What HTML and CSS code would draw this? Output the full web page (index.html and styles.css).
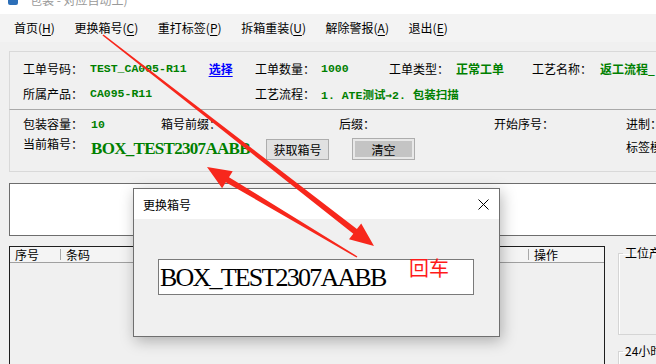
FILE: index.html
```html
<!DOCTYPE html>
<html lang="zh-CN">
<head>
<meta charset="utf-8">
<title>包装</title>
<link rel="stylesheet" href="styles.css">
</head>
<body>
<div class="titlebar"><span class="app-icon"></span><span class="title-text">包装 - 对应自动工)</span></div>
<nav class="menubar">
  <span class="menu-item">首页(<u>H</u>)</span>
  <span class="menu-item">更换箱号(<u>C</u>)</span>
  <span class="menu-item">重打标签(<u>P</u>)</span>
  <span class="menu-item">拆箱重装(<u>U</u>)</span>
  <span class="menu-item">解除警报(<u>A</u>)</span>
  <span class="menu-item">退出(<u>E</u>)</span>
</nav>
<main class="content">
  <section class="group g1">
    <span class="lbl">工单号码：</span>
    <span class="val-wrap"><span class="val">TEST_CA095-R11</span><span class="link">选择</span></span>
    <span class="lbl">工单数量：</span>
    <span class="val">1000</span>
    <span class="lbl">工单类型：</span>
    <span class="val val-cjk">正常工单</span>
    <span class="lbl">工艺名称：</span>
    <span class="val val-cjk">返工流程_</span>
    <span class="lbl">所属产品：</span>
    <span class="val">CA095-R11</span>
    <span class="lbl">工艺流程：</span>
    <span class="val val-span">1. ATE测试<span class="arrow-glyph">→</span>2. 包装扫描</span>
  </section>
  <section class="group g2">
    <div class="row row1">
      <span class="cell w138"><span class="lbl lw">包装容量：</span><span class="val">10</span></span>
      <span class="cell w178"><span class="lbl">箱号前缀：</span></span>
      <span class="cell w155"><span class="lbl">后缀：</span></span>
      <span class="cell w132"><span class="lbl">开始序号：</span></span>
      <span class="cell"><span class="lbl">进制：</span></span>
    </div>
    <div class="row row2">
      <span class="lbl lw lbl-up">当前箱号：</span>
      <span class="box-no">BOX_TEST2307AABB</span>
      <span class="btn">获取箱号</span>
      <span class="btn btn-pressed">清空</span>
      <span class="lbl lbl-right">标签模板：</span>
    </div>
  </section>
  <div class="log-box"></div>
  <div class="bottom">
    <div class="table">
      <div class="thead">
        <span class="th c-no">序号</span>
        <span class="th c-code">条码</span>
        <span class="th c-op">操作</span>
      </div>
    </div>
    <div class="side">
      <fieldset class="fs fs1"><legend>工位产量</legend></fieldset>
      <fieldset class="fs fs2"><legend>24小时产量</legend></fieldset>
    </div>
  </div>
</main>

<div class="dialog">
  <div class="dlg-title">
    <span>更换箱号</span>
    <svg class="dlg-close" width="11" height="11" viewBox="0 0 11 11"><path d="M0.5 0.5 L10.5 10.5 M10.5 0.5 L0.5 10.5" stroke="#000" stroke-width="1" fill="none"/></svg>
  </div>
  <div class="dlg-body">
    <div class="dlg-input">BOX_TEST2307AABB</div>
  </div>
</div>

<span class="note">回车</span>

<svg class="arrows" width="656" height="364" viewBox="0 0 656 364">
  <polygon fill="#f7271c" points="103.5,34.4 356.9,228.9 361.2,223.4 374,246 349.0,239.2 353.3,233.7 102.5,35.6"/>
  <polygon fill="#f7271c" points="207,167 232.7,171.2 229.0,177.2 357.4,256.4 356.6,257.6 225.8,182.2 222.1,188.2"/>
</svg>
</body>
</html>
```
FILE: styles.css
```css
html, body {
  margin: 0;
  padding: 0;
}
body {
  width: 656px;
  height: 364px;
  overflow: hidden;
  position: relative;
  background: #f0f0f0;
  font-family: "Noto Sans CJK SC", "Noto Sans", sans-serif;
  font-size: 12px;
  color: #000;
}

/* title bar */
.titlebar {
  height: 14px;
  background: #fff;
  overflow: hidden;
  display: flex;
  align-items: flex-start;
}
.app-icon {
  width: 10px;
  height: 12px;
  margin: -7px 0 0 8px;
  background: #2d6fb8;
  border-radius: 2px;
}
.title-text {
  margin: -9px 0 0 12px;
  color: #9a9a9a;
  font-size: 12px;
  line-height: 17px;
}

/* menu */
.menubar {
  height: 28px;
  background: #f3f3f3;
  display: flex;
  align-items: center;
  padding-left: 4px;
}
.menu-item {
  padding: 0 9.6px 0 10px;
  line-height: 16px;
}
.menu-item u {
  text-underline-offset: 2px;
}

/* content */
.content {
  padding: 9px 0 0 9px;
}
.group {
  margin-right: -20px;
  box-sizing: border-box;
}
.g1 {
  height: 59px;
  border: 1px solid #d9d9d9;
  border-bottom: 1px solid #a9a9a9;
  display: grid;
  grid-template-columns: 67px 165px 66px 68px 67px 76px 68px auto;
  grid-auto-rows: 25px;
  align-items: center;
  padding: 4px 0 0 13px;
}
.lbl {
  white-space: nowrap;
  line-height: 16px;
}
.val {
  font-family: "Liberation Mono", "Noto Sans CJK SC", monospace;
  font-weight: bold;
  font-size: 11.5px;
  color: #008000;
  white-space: nowrap;
}
.arrow-glyph {
  font-family: "DejaVu Sans Mono", monospace;
  font-weight: bold;
  font-size: 11px;
}
.val-cjk {
  font-family: "Noto Sans CJK SC", sans-serif;
  font-size: 12px;
  color: #008000;
}
.val-span {
  grid-column: 4 / span 5;
}
.val-wrap {
  display: flex;
  align-items: center;
  gap: 22px;
}
.link {
  color: #0000ff;
  font-weight: bold;
  text-decoration: underline;
  text-underline-offset: 2px;
}

.g2 {
  height: 62px;
  border-left: 1px solid #d9d9d9;
  border-bottom: 1px solid #d9d9d9;
  padding: 4px 0 0 13px;
}
.row {
  display: flex;
  align-items: center;
}
.row1 {
  height: 20px;
}
.cell {
  display: flex;
  align-items: center;
  flex: none;
}
.w138 { width: 138px; }
.w178 { width: 178px; }
.w155 { width: 155px; }
.w132 { width: 132px; }
.lw {
  width: 68px;
  flex: none;
}
.row2 {
  height: 24px;
  margin-top: 3px;
}
.lbl-up {
  align-self: flex-start;
  margin-top: -1px;
}
.box-no {
  width: 175px;
  flex: none;
  font-family: "Liberation Serif", serif;
  font-weight: bold;
  font-size: 17px;
  letter-spacing: -0.7px;
  color: #008000;
  white-space: nowrap;
  line-height: 20px;
}
.btn {
  width: 63px;
  height: 21px;
  box-sizing: border-box;
  flex: none;
  display: flex;
  align-items: center;
  justify-content: center;
  background: #e1e1e1;
  border: 1px solid #adadad;
}
.btn-pressed {
  margin-left: 23px;
  height: 22px;
  background: #c4c4c4;
  box-shadow: inset 0 0 0 2px #e8e8e8;
}
.lbl-right {
  margin-left: 211px;
  align-self: flex-start;
  margin-top: 2px;
}

.log-box {
  margin-top: 11px;
  height: 53px;
  box-sizing: border-box;
  background: #fff;
  border: 1px solid #6d6d6d;
  margin-right: -20px;
}

.bottom {
  margin-top: 10px;
  display: flex;
  align-items: flex-start;
}
.table {
  width: 596px;
  height: 140px;
  box-sizing: border-box;
  border: 1px solid #1e1e1e;
  flex: none;
}
.thead {
  height: 16px;
  box-sizing: border-box;
  border-bottom: 1px solid #a0a0a0;
  display: flex;
  background: #f4f4f4;
}
.th {
  display: flex;
  align-items: center;
  line-height: 14px;
}
.th + .th::before {
  content: "";
  width: 1px;
  height: 11px;
  background: #a8a8a8;
  margin-right: 5px;
}
.c-no {
  width: 50px;
  padding-left: 5px;
  box-sizing: border-box;
}
.c-code {
  flex: 1;
}
.c-op {
  width: 76px;
}

.side {
  margin-left: 13px;
  width: 120px;
  flex: none;
}
.fs {
  margin: 0;
  padding: 0 0 0 4px;
  border: 1px solid #d5d5d5;
  box-shadow: 1px 1px 0 #fff inset;
  min-inline-size: 0;
}
.fs legend {
  padding: 0 2px;
  line-height: 14px;
}
.fs1 {
  height: 89px;
  box-sizing: border-box;
}
.fs2 {
  margin-top: 9px;
  height: 40px;
}

/* dialog */
.dialog {
  position: absolute;
  left: 133px;
  top: 188px;
  width: 367px;
  height: 149px;
  box-sizing: border-box;
  border: 1px solid #6f6f6f;
  background: #f0f0f0;
  box-shadow: 2px 4px 14px rgba(0, 0, 0, 0.28);
  display: flex;
  flex-direction: column;
}
.dlg-title {
  height: 30px;
  background: #fff;
  display: flex;
  align-items: center;
  justify-content: space-between;
  padding: 0 10px 0 9px;
  flex: none;
}
.dlg-close {
  display: block;
}
.dlg-body {
  flex: 1;
  padding: 40px 0 0 24px;
}
.dlg-input {
  width: 316px;
  height: 36px;
  box-sizing: border-box;
  background: #fff;
  border: 1px solid #7a7a7a;
  padding-left: 1px;
  font-family: "Liberation Serif", serif;
  font-size: 26px;
  letter-spacing: -1.8px;
  line-height: 36px;
  white-space: nowrap;
  overflow: hidden;
}

.note {
  position: absolute;
  left: 409px;
  top: 257px;
  color: #ff1a1a;
  font-size: 20px;
  line-height: 22px;
}

.arrows {
  position: absolute;
  left: 0;
  top: 0;
  pointer-events: none;
}
```
